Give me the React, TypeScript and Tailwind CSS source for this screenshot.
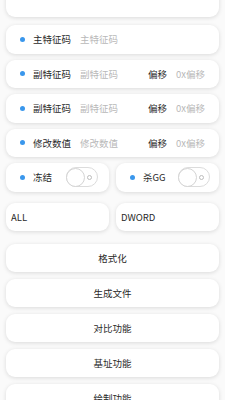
import React from "react";

const card = "bg-white rounded-[9px] shadow-[0_1px_4px_rgba(0,0,0,0.13)]";

const Dot = () => <span className="w-[5px] h-[5px] rounded-full bg-[#3a97ec] shrink-0" />;

const Switch = () => (
  <div className="w-[32px] h-[20px] rounded-full border border-[#dcdcdc] bg-white flex items-center justify-between pr-[5px]">
    <div className="w-[19px] h-[19px] rounded-full border border-[#d4d4d4] bg-white -ml-px" />
    <div className="w-[5px] h-[5px] rounded-full border border-[#bdbdbd]" />
  </div>
);

const FieldRow: React.FC<{ label: string; offset?: boolean }> = ({ label, offset }) => (
  <div className={`${card} h-[28.5px] flex items-center pl-[14px] pr-[14px]`}>
    <Dot />
    <span className="ml-[8px] text-[9.5px] text-[#2a2a2a]">{label}</span>
    <span className="ml-[9px] text-[9.5px] text-[#b8b8b8]">{label}</span>
    {offset && (
      <>
        <span className="ml-auto text-[9.5px] text-[#2a2a2a]">偏移</span>
        <span className="ml-[9px] text-[9.5px] text-[#b8b8b8]">0x偏移</span>
      </>
    )}
  </div>
);

const ToggleCard: React.FC<{ label: string; gap: string }> = ({ label, gap }) => (
  <div className={`${card} flex-1 h-[28.5px] flex items-center pl-[14px]`}>
    <Dot />
    <span className="ml-[8px] text-[9.5px] text-[#2a2a2a]">{label}</span>
    <div className={gap}>
      <Switch />
    </div>
  </div>
);

const buttons = ["格式化", "生成文件", "对比功能", "基址功能", "绘制功能"];

export default function App() {
  return (
    <div
      className="w-[225px] h-[400px] overflow-hidden bg-[#fafafa] px-[6px] flex flex-col"
      style={{ fontFamily: '"Noto Sans CJK SC", "Noto Sans", sans-serif' }}
    >
      <div className={`${card} h-[28px] mt-[-11px] shrink-0`} />
      <div className="flex flex-col gap-[6px] mt-[8px]">
        <FieldRow label="主特征码" />
        <FieldRow label="副特征码" offset />
        <FieldRow label="副特征码" offset />
        <FieldRow label="修改数值" offset />
        <div className="flex gap-[7px]">
          <ToggleCard label="冻结" gap="ml-[14px]" />
          <ToggleCard label="杀GG" gap="ml-[12px]" />
        </div>
      </div>
      <div className="flex gap-[7px] mt-[11.5px]">
        <div className={`${card} flex-1 h-[27.5px] flex items-center pl-[5px] text-[9.5px] text-[#2a2a2a]`}>ALL</div>
        <div className={`${card} flex-1 h-[27.5px] flex items-center pl-[5px] text-[9.5px] text-[#2a2a2a]`}>DWORD</div>
      </div>
      <div className="flex flex-col gap-[7px] mt-[13.5px]">
        {buttons.map((b) => (
          <div key={b} className={`${card} h-[28px] shrink-0 flex items-center justify-center text-[9.5px] text-[#2a2a2a]`}>
            {b}
          </div>
        ))}
      </div>
    </div>
  );
}
